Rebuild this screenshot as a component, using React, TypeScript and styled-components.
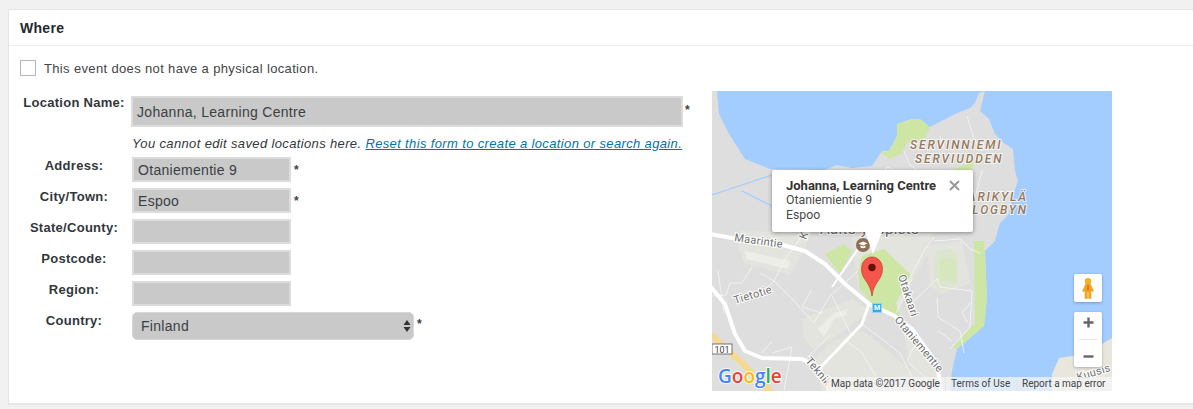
import React from "react";
import styled, { createGlobalStyle } from "styled-components";

const Global = createGlobalStyle`
  html, body { margin: 0; padding: 0; background: #f1f1f1; overflow: hidden; }
  body { font-family: "Liberation Sans", Arial, sans-serif; color: #32373c; }
`;

const Page = styled.div`
  height: 409px;
  padding: 9px 0 0 8px;
  box-sizing: border-box;
  overflow: hidden;
`;
const Card = styled.section`
  width: 1190px;
  height: 395px;
  box-sizing: border-box;
  background: #fff;
  border: 1px solid #e5e5e5;
  box-shadow: 0 1px 1px rgba(0, 0, 0, 0.04);
`;
const Header = styled.h2`
  margin: 0;
  height: 36px;
  box-sizing: border-box;
  padding: 0 11px;
  font-size: 14px;
  line-height: 37px;
  letter-spacing: 0.3px;
  font-weight: 700;
  color: #23282d;
  border-bottom: 1px solid #eee;
`;
const Body = styled.div`
  padding: 14px 0 0 11px;
`;
const CheckRow = styled.label`
  display: flex;
  align-items: center;
  gap: 8px;
  height: 16px;
  font-size: 13px;
  letter-spacing: 0.35px;
  color: #444;
`;
const CheckBox = styled.span`
  width: 16px;
  height: 16px;
  box-sizing: border-box;
  background: #fff;
  border: 1px solid #b4b9be;
`;
const Columns = styled.div`
  display: flex;
  margin-top: 15px;
`;
const FormColumn = styled.div`
  width: 692px;
  margin-top: 5px;
`;
const Row = styled.div`
  display: flex;
  margin-bottom: 6px;
  margin-left: -4px;
`;
const Label = styled.label<{ $top: number }>`
  width: 116px;
  flex: none;
  text-align: center;
  font-size: 13px;
  font-weight: 700;
  letter-spacing: 0.28px;
  color: #32373c;
  line-height: 15px;
  margin-top: ${(p) => p.$top}px;
`;
const Input = styled.input<{ $wide?: boolean }>`
  display: block;
  box-sizing: border-box;
  width: ${(p) => (p.$wide ? "552px" : "159px")};
  height: ${(p) => (p.$wide ? "31px" : "25px")};
  margin-left: ${(p) => (p.$wide ? "-1px" : "0")};
  padding: 0 4px;
  background: #c9c9c9;
  border: 2px solid #dcdcdc;
  border-radius: 0;
  outline: none;
  font: 14px "Liberation Sans", Arial, sans-serif;
  letter-spacing: 0.3px;
  color: #3a3f44;
`;
const Req = styled.span<{ $top: number; $left?: number }>`
  font-size: 12px;
  font-weight: 700;
  line-height: 18px;
  margin-left: ${(p) => p.$left ?? 3}px;
  margin-top: ${(p) => p.$top}px;
  color: #3a3f50;
`;
const Help = styled.p`
  margin: 9px 0 5px 112px;
  height: 16px;
  font-size: 13px;
  line-height: 16px;
  font-style: italic;
  letter-spacing: 0.36px;
  color: #32373c;
  white-space: nowrap;
  a { color: #0073aa; text-decoration: underline; }
`;
const SelectWrap = styled.div`
  position: relative;
  width: 282px;
  height: 28px;
`;
const Select = styled.select`
  appearance: none;
  display: block;
  width: 100%;
  height: 100%;
  box-sizing: border-box;
  padding: 0 8px;
  background: #c9c9c9;
  border: 1px solid #d8d8d8;
  border-radius: 5px;
  outline: none;
  font: 14px "Liberation Sans", Arial, sans-serif;
  letter-spacing: 0.3px;
  color: #3a3f44;
`;
const Arrows = styled.svg`
  position: absolute;
  right: 3px;
  top: 7px;
`;

const MapFrame = styled.div`
  position: relative;
  width: 400px;
  height: 300px;
  overflow: hidden;
  background: #a3ccff;
  font-family: Roboto, "Liberation Sans", sans-serif;
`;
const MapCanvas = styled.svg`
  display: block;
`;
const Popup = styled.div`
  position: absolute;
  left: 60px;
  top: 79px;
  width: 201px;
  height: 62px;
  box-sizing: border-box;
  padding: 8px 14px;
  background: #fff;
  border-radius: 2px;
  box-shadow: 0 1px 4px rgba(0, 0, 0, 0.4);
  line-height: 15px;
  color: #3c4043;
  strong { display: block; font-size: 13px; font-weight: 700; color: #333; white-space: nowrap; }
  div { font-size: 12.3px; font-weight: 400; color: #484848; }
  &::after {
    content: "";
    position: absolute;
    left: 93px;
    top: 62px;
    border-left: 8px solid transparent;
    border-right: 9px solid transparent;
    border-top: 22px solid #fff;
  }
`;
const Close = styled.svg`
  position: absolute;
  right: 13px;
  top: 10px;
`;
const Pin = styled.svg`
  position: absolute;
  left: 149px;
  top: 165px;
`;
const MetroMark = styled.span`
  position: absolute;
  left: 160px;
  top: 212px;
  width: 8px;
  height: 8px;
  background: #2eaef0;
  border: 1px solid #8fd6fb;
  color: #fff;
  font-size: 7px;
  font-weight: 700;
  line-height: 8px;
  text-align: center;
`;
const ControlBox = styled.div<{ $top: number; $height: number }>`
  position: absolute;
  left: 362px;
  top: ${(p) => p.$top}px;
  width: 28px;
  height: ${(p) => p.$height}px;
  display: flex;
  flex-direction: column;
  align-items: center;
  justify-content: space-around;
  background: #fff;
  border-radius: 2px;
  box-shadow: 0 1px 3px rgba(0, 0, 0, 0.25);
`;
const Divider = styled.span`
  width: 18px;
  height: 1px;
  background: #e6e6e6;
`;
const Attribution = styled.div`
  position: absolute;
  right: 0;
  bottom: 0;
  width: 286px;
  height: 14px;
  display: flex;
  align-items: center;
  background: rgba(245, 245, 245, 0.75);
  font-size: 10px;
  line-height: 14px;
  color: #444;
  white-space: nowrap;
`;
const AttrItem = styled.span<{ $width: number }>`
  width: ${(p) => p.$width}px;
  box-sizing: border-box;
  padding-left: 5px;
  border-right: 1px solid #e6e6e6;
  &:last-child { border-right: 0; }
`;
const GoogleLogo = styled.text`
  font-family: "Open Sans", Roboto, sans-serif;
  font-size: 19px;
  font-weight: 600;
  paint-order: stroke;
  stroke: rgba(255, 255, 255, 0.85);
  stroke-width: 2px;
`;
const AreaLabel = styled.text`
  font-size: 12px;
  font-style: italic;
  font-weight: 500;
  letter-spacing: 1.9px;
  fill: #94785a;
  paint-order: stroke;
  stroke: rgba(255, 255, 255, 0.75);
  stroke-width: 2px;
`;
const StreetLabel = styled.text<{ $size?: number }>`
  font-size: ${(p) => p.$size ?? 11}px;
  letter-spacing: 0.3px;
  fill: #6f6f6f;
  paint-order: stroke;
  stroke: #fff;
  stroke-width: 2px;
`;

const minorRoads = [
  "M92 142 L72 170 L62 190 L50 202",
  "M48 182 L62 190 L82 210 L102 232",
  "M102 232 L118 205 L146 180",
  "M0 205 L14 204 L18 192 L30 192 L40 176",
  "M100 198 L90 216 L110 222",
  "M150 233 L188 262 L200 286",
  "M118 244 L92 270",
  "M135 250 L150 262 L158 275 L172 300",
  "M196 190 L212 160 L222 146",
  "M200 188 L184 222",
  "M205 250 L195 270 L215 288",
  "M200 212 L225 188 L228 196 L260 200 L258 236 L238 258",
  "M225 206 L226 226 L248 240 L252 262",
  "M240 250 L226 240",
  "M258 212 L250 222 L256 232",
  "M222 150 L248 148 L258 158 L268 162",
  "M192 60 L198 74 L206 80 L204 112",
  "M190 84 L176 76 L164 88 L158 112 L166 140",
  "M255 25 L262 48 L270 60",
  "M228 45 L232 58",
  "M270 80 L262 110 L256 128",
  "M120 205 L140 245",
  "M150 135 L170 136",
  "M6 180 L12 222",
  "M50 262 L60 250",
  "M60 262 L80 256 L72 300",
];

const MapDrawing = () => (
  <MapCanvas width={400} height={300} viewBox="0 0 400 300">
    <rect width="400" height="300" fill="#a3ccff" />
    <path
      fill="#dedede"
      d="M0 0 L5 0 L7 23 L17 43 L33 68 L43 72 L58 78 L112 79 L125 74 L140 77 L160 75 L170 60 L177 60 L185 45 L185 33 L200 28 L208 28 L218 36 L243 23 L258 17 L263 12 L267 2 L273 0 L270 12 L268 20 L277 28 L283 43 L292 52 L301 58 L303 80 L306 90 L300 107 L297 123 L288 132 L283 150 L273 160 L275 207 L272 235 L245 258 L240 280 L238 300 L0 300 Z"
    />
    <path fill="#e8e6dd" d="M340 300 L340 283 L347 267 L373 263 L390 253 L400 247 L400 300 Z" />
    <path fill="#e4e4de" d="M28 140 L100 142 L92 158 L78 184 L32 172 L26 156 Z" />
    <path fill="#eeeee8" d="M33 160 L78 170 L76 178 L34 168 Z" />
    <path fill="#e4e4de" d="M90 228 L140 208 L158 220 L118 250 L100 258 L92 246 Z" />
    <path fill="#e4e4de" d="M120 250 L152 240 L200 280 L205 300 L110 300 L100 270 Z" />
    <path fill="#e4e4de" d="M140 142 L220 142 L215 165 L196 196 L185 225 L155 205 L145 190 Z" />
    <path fill="#eeeee8" d="M106 238 L122 222 L136 218 L134 224 L122 228 L112 246 Z" />
    <path fill="#e4e4de" d="M190 232 L200 240 L230 290 L222 300 L205 300 L196 265 Z" />
    <path fill="#e4e4de" d="M216 155 L250 150 L258 192 L230 203 L218 195 Z" />
    <rect x="222" y="158" width="24" height="40" rx="9" fill="#dde5d0" />
    <rect x="228" y="167" width="16" height="23" fill="#d6e6bd" />
    <path fill="#cde6a4" d="M168 62 L177 60 L185 45 L185 33 L200 28 L208 28 L218 36 L213 47 L195 52 L190 62 L178 68 Z" />
    <path fill="#cde6a4" d="M240 79 L262 70 L255 95 L248 110 L232 112 Z" />
    <path fill="#cde6a4" d="M113 163 L132 153 L140 160 L128 183 Z" />
    <path fill="#cde6a4" d="M146 182 L150 165 L172 158 L199 184 L184 212 L190 232 L158 210 L148 198 Z" />
    <path fill="#cde6a4" d="M262 150 L272 150 L275 207 L272 235 L245 258 L241 256 L263 232 Z" />
    <path fill="none" stroke="#a3ccff" strokeWidth="1.3" d="M0 104 L30 94 L60 84" />
    <path fill="none" stroke="#a3ccff" strokeWidth="1.3" d="M30 100 L62 116" />
    <path fill="none" stroke="#f6d88e" strokeWidth="6" d="M-2 243 L30 272 L62 304" />
    <g fill="none" stroke="#f6f6f6" strokeOpacity="0.8" strokeWidth="1">
      {minorRoads.map((d) => (
        <path key={d} d={d} />
      ))}
    </g>
    <g fill="none" stroke="#fff" strokeLinejoin="round">
      <path strokeWidth="4" d="M-2 143 L20 147 L67 153 L93 160 L113 173 L133 193 L157 213 L183 225 L200 238 L225 273 L229 300" />
      <path strokeWidth="4" d="M-2 195 L13 213 L23 243 L33 260 L50 267 L90 268 L110 278" />
      <path strokeWidth="3" d="M108 277 L150 233 L157 213" />
      <path strokeWidth="2" d="M120 196 L146 158" />
    </g>
    <AreaLabel x="198" y="58">SERVINNIEMI</AreaLabel>
    <AreaLabel x="203" y="72">SERVIUDDEN</AreaLabel>
    <AreaLabel x="316" y="110" textAnchor="end">ARIKYLÄ</AreaLabel>
    <AreaLabel x="316" y="123" textAnchor="end">LOGBYN</AreaLabel>
    <StreetLabel x="108" y="143" $size={15}>Aalto-yliopisto</StreetLabel>
    <StreetLabel x="22" y="150" transform="rotate(8 22 150)">Maarintie</StreetLabel>
    <StreetLabel x="23" y="213" transform="rotate(-17 23 213)">Tietotie</StreetLabel>
    <StreetLabel x="186" y="185" transform="rotate(72 186 185)">Otakaari</StreetLabel>
    <StreetLabel x="182" y="229" transform="rotate(50 182 229)">Otaniementie</StreetLabel>
    <StreetLabel x="93" y="270" transform="rotate(50 93 270)">Teknik</StreetLabel>
    <StreetLabel x="366" y="290" transform="rotate(-17 366 290)">Kuusis</StreetLabel>
    <StreetLabel x="94" y="149" transform="rotate(-70 94 149)">Ko</StreetLabel>
    <circle cx="151" cy="154" r="7" fill="#8d6e54" />
    <path fill="#fff" d="M151 150.5 L155.5 152.5 L151 154.5 L146.5 152.5 Z M148.5 154.5 L151 155.6 L153.5 154.5 V156.5 Q151 158 148.5 156.5 Z" />
    <rect x="0" y="253" width="20" height="10" fill="#fff" stroke="#555" strokeWidth="0.8" />
    <text x="10" y="261.5" fontSize="9" textAnchor="middle" fill="#444">101</text>
    <GoogleLogo x="6" y="292">
      <tspan fill="#4285f4">G</tspan>
      <tspan fill="#ea4335">o</tspan>
      <tspan fill="#fbbc05">o</tspan>
      <tspan fill="#4285f4">g</tspan>
      <tspan fill="#34a853">l</tspan>
      <tspan fill="#ea4335">e</tspan>
    </GoogleLogo>
  </MapCanvas>
);

const MapView = () => (
  <MapFrame>
    <MapDrawing />
    <Pin width="22" height="41" viewBox="0 0 22 41">
      <path
        d="M11 40 C10.4 33 7.5 28.5 4 23.5 C1.8 20.3 0.6 17.5 0.6 12.6 C0.6 6 5.2 1 11 1 C16.8 1 21.4 6 21.4 12.6 C21.4 17.5 20.2 20.3 18 23.5 C14.5 28.5 11.6 33 11 40 Z"
        fill="#f4564c"
        stroke="#d33b34"
        strokeWidth="0.8"
      />
      <circle cx="11" cy="11.5" r="3.7" fill="#6b0f0c" />
    </Pin>
    <MetroMark>M</MetroMark>
    <Popup>
      <strong>Johanna, Learning Centre</strong>
      <div>Otaniemientie 9</div>
      <div>Espoo</div>
      <Close width="11" height="11" viewBox="0 0 11 11">
        <path d="M1 1 L10 10 M10 1 L1 10" stroke="#999" strokeWidth="2" />
      </Close>
    </Popup>
    <ControlBox $top={183} $height={28}>
      <svg width="12" height="21" viewBox="0 0 12 21">
        <circle cx="6" cy="3.2" r="2.9" fill="#fbb41c" stroke="#d98c0a" strokeWidth="0.5" />
        <path d="M3.5 6.2 H8.5 L11.5 13 L10 13.8 L9 11 V20.5 H6.6 V14 H5.4 V20.5 H3 V11 L2 13.8 L0.5 13 Z" fill="#f7a81b" stroke="#d98c0a" strokeWidth="0.4" />
        <path d="M6 7 V12.5" stroke="#d0451b" strokeWidth="1" />
      </svg>
    </ControlBox>
    <ControlBox $top={221} $height={55}>
      <svg width="11" height="11" viewBox="0 0 11 11">
        <path d="M5.5 0.5 V10.5 M0.5 5.5 H10.5" stroke="#666" strokeWidth="2.4" />
      </svg>
      <Divider />
      <svg width="11" height="11" viewBox="0 0 11 11">
        <path d="M0.5 5.5 H10.5" stroke="#666" strokeWidth="2.4" />
      </svg>
    </ControlBox>
    <Attribution>
      <AttrItem $width={120}>Map data ©2017 Google</AttrItem>
      <AttrItem $width={71}>Terms of Use</AttrItem>
      <AttrItem $width={95}>Report a map error</AttrItem>
    </Attribution>
  </MapFrame>
);

const addressFields: { label: string; value: string; required: boolean }[] = [
  { label: "Address:", value: "Otaniementie 9", required: true },
  { label: "City/Town:", value: "Espoo", required: true },
  { label: "State/County:", value: "", required: false },
  { label: "Postcode:", value: "", required: false },
  { label: "Region:", value: "", required: false },
];

export default function App() {
  return (
    <Page>
      <Global />
      <Card>
        <Header>Where</Header>
        <Body>
          <CheckRow>
            <CheckBox />
            This event does not have a physical location.
          </CheckRow>
          <Columns>
            <FormColumn>
              <Row>
                <Label $top={-1}>Location Name:</Label>
                <Input $wide disabled value="Johanna, Learning Centre" readOnly />
                <Req $top={5} $left={2}>*</Req>
              </Row>
              <Help>
                You cannot edit saved locations here. <a href="#reset">Reset this form to create a location or search again.</a>
              </Help>
              {addressFields.map((f) => (
                <Row key={f.label}>
                  <Label $top={1}>{f.label}</Label>
                  <Input disabled value={f.value} readOnly />
                  {f.required && <Req $top={4}>*</Req>}
                </Row>
              ))}
              <Row>
                <Label $top={1}>Country:</Label>
                <SelectWrap>
                  <Select defaultValue="Finland">
                    <option>Finland</option>
                  </Select>
                  <Arrows width="8" height="14" viewBox="0 0 8 14">
                    <path d="M4 1 L7.5 6 H0.5 Z M4 13 L0.5 8 H7.5 Z" fill="#333" />
                  </Arrows>
                </SelectWrap>
                <Req $top={3}>*</Req>
              </Row>
            </FormColumn>
            <MapView />
          </Columns>
        </Body>
      </Card>
    </Page>
  );
}
